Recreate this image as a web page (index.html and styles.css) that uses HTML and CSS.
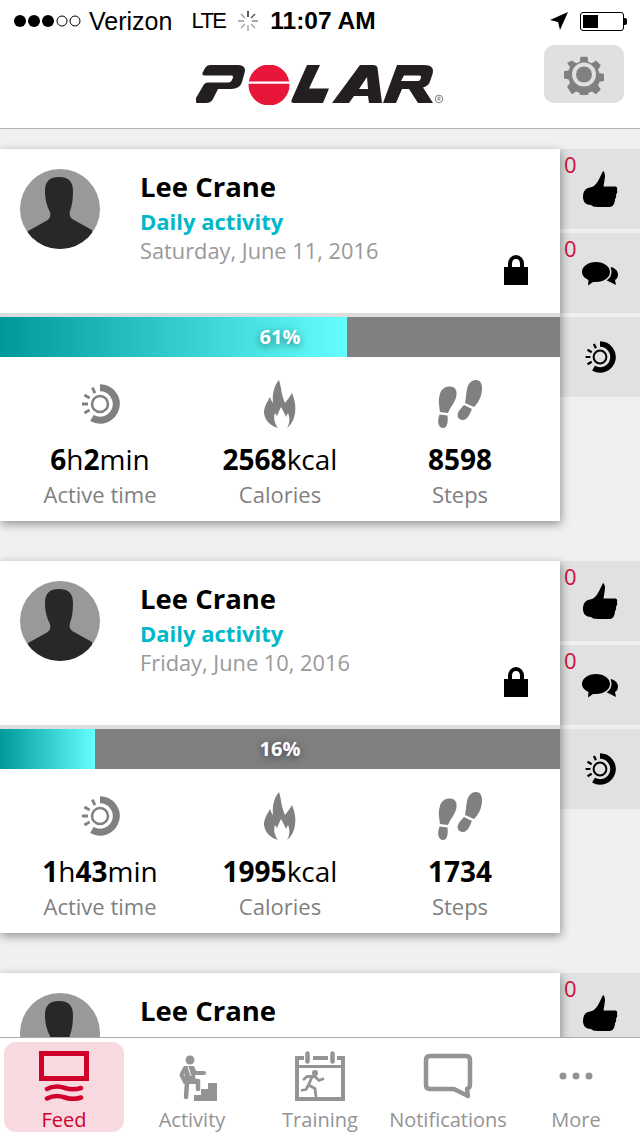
FILE: index.html
```html
<!DOCTYPE html>
<html lang="en">
  <head>
    <meta charset="UTF-8" />
    <meta name="viewport" content="width=device-width, initial-scale=1.0" />
    <title>Polar Feed</title>
    <link rel="stylesheet" href="styles.css">
  </head>
  <body>
    <!-- shared icons -->
    <svg class="sprite" aria-hidden="true">
      <symbol id="i-ring" viewBox="0 0 40 40">
        <path d="M20 3.800A16.200 16.200 0 1 1 11.900 34" fill="none" stroke="currentColor" stroke-width="7" />
        <circle cx="20" cy="20" r="8" fill="none" stroke="currentColor" stroke-width="2.500" />
        <path d="M9.600 26 4.400 29M8 20H2M9.600 14 4.400 11M14.900 9.100 12.400 3.700" fill="none" stroke="currentColor" stroke-width="2.800" />
      </symbol>
      <symbol id="i-flame" viewBox="0 0 32 48">
        <path fill="currentColor" d="M15 0C17 6 17 10 18 14C19 18 20 21 21 23C23 20 26 17 28 13C31 20 32 27 31 33C30 40 27 45 23 48C26 43 26 38 24 33L22 37C21 34 19 31 17 27C15 31 14 34 13 36L11 33C9 38 11 44 14 48C7 46 1 41 0 33C0 26 3 23 6 17C7 20 8 22 9 23C8 14 10 6 15 0Z" />
      </symbol>
      <symbol id="i-feet" viewBox="0 0 46 48">
        <path fill="currentColor" d="M13 6.500C18 6.500 20 10 19.500 15C19 21 14 26 11 33L3 32C2 24 1 20 3 14C4 9 8 6.500 13 6.500Z" />
        <path fill="currentColor" d="M2.500 34.500L10.500 35.500C11 40 11 48 6 48C1 48 0 41 2.500 34.500Z" />
        <path fill="currentColor" d="M39 0C44 0 45.500 5 45 10C44.500 17 41 23 37 27L28 23C29 18 29 14 30 9C31 4 34 0 39 0Z" />
        <path fill="currentColor" d="M27 25L35 29C33 33 31 40 26 40C21 40 20 36 21 33C22 30 25 27 27 25Z" />
      </symbol>
      <symbol id="i-thumb" viewBox="0 0 35 36">
        <path fill="currentColor" d="M20 0C22 1 22.500 5 21.500 9L20.500 15.500H32C34 15.500 34.500 17 34 19C34.500 21 34 22.500 33 23.500C33.500 25.500 33 27 32 28C32 31 31 33 30 34.500C29 35.500 27 36 25 36H15C11 36 9 35 8 34C3 34 0 31 0 26C0 21 2 18 5 17C8 16 10 16 12 14C15 11 17 6 20 0Z" />
      </symbol>
      <symbol id="i-chat" viewBox="0 0 36 24">
        <path fill="currentColor" d="M29 5C33 6 36 9 36 12.500C36 15 35 17 33 18L34 23L28 20L24 18Z" />
        <path fill="currentColor" stroke="#e0e1e3" stroke-width="3" paint-order="stroke" d="M14 0C22 0 28 4.500 28 10S22 20 14 20H11L6 23.500L6.500 18C3 16.500 0 13.500 0 10C0 4.500 6 0 14 0Z" />
      </symbol>
      <symbol id="i-lock" viewBox="0 0 24 30">
        <path fill="currentColor" d="M0 12h24v18H0z" />
        <path fill="none" stroke="currentColor" stroke-width="4" d="M6 13V9c0-4 2.500-7 6-7s6 3 6 7v4" />
      </symbol>
    </svg>

    <div class="status">
      <svg class="signal" width="68" height="14" viewBox="0 0 68 14">
        <circle cx="7" cy="7" r="6" />
        <circle cx="21" cy="7" r="6" />
        <circle cx="35" cy="7" r="6" />
        <circle class="off" cx="49" cy="7" r="5" />
        <circle class="off" cx="62" cy="7" r="5" />
      </svg>
      <span class="carrier">Verizon</span>
      <span class="net">LTE</span>
      <svg class="spinner" width="20" height="20" viewBox="0 0 20 20">
        <path d="M10 0v6" stroke="#222" />
        <path d="M17 3 13 7" stroke="#555" />
        <path d="M20 10h-6" stroke="#888" />
        <path d="M17 17 13 13M10 20v-6M3 17 7 13" stroke="#aaa" />
        <path d="M0 10h6M3 3 7 7" stroke="#999" />
      </svg>
      <span class="clock">11:07 AM</span>
      <svg class="arrow" width="18" height="18" viewBox="0 0 18 18"><path d="M18 0 0 8l8 2 2 8z" /></svg>
      <span class="battery"><span class="battery-fill"></span></span>
    </div>

    <header class="topbar">
      <span></span>
      <svg class="logo" width="249" height="40" viewBox="0 0 249 40" role="img" aria-label="Polar">
        <path fill="#231f20" d="M14 0H41Q51 0 48.500 8L46 17Q44 24 35 24H22L17 34Q15 38 10 38H2Q-2 38 0 33L7 21Q8.500 17.500 12 17.500H32Q35 17.500 36 15L37 12.500Q37.500 10.500 35 10.500H9Q5 10.500 7 7L9 3Q11 0 14 0Z" />
        <circle fill="#e8173a" cx="73" cy="20" r="20.500" />
        <path fill="#fff" d="M52 16.500h42v2.300H52z" />
        <path fill="#231f20" d="M111 0H124L113 23.500H133L127 38H98Q94 38 96 34Z" />
        <path fill="#231f20" fill-rule="evenodd" d="M164 0H177Q181 0 181.500 3L186 38H173L172 31H158L153 38H136ZM171 12 163 24H172Z" />
        <path fill="#231f20" fill-rule="evenodd" d="M201 0H228Q239 0 236.500 9L234.500 15Q233 21 227 22.500L237 38H222L213 24H206L200 38H187ZM208 10.500 205 16H222Q224 16 224.500 14L225 12.500Q225.500 10.500 223 10.500Z" />
        <circle cx="243" cy="34" r="3.800" fill="none" stroke="#666" stroke-width=".8" />
        <path d="M242 36v-4h1.300q1 0 1 1t-1 1h-1.300m1.300 0 1 2" fill="none" stroke="#666" stroke-width=".6" />
      </svg>
      <button class="gear-btn" aria-label="Settings">
        <svg width="40" height="41" viewBox="0 0 40 41">
          <path fill="#808080" fill-rule="evenodd" d="M16 0h8l1 6 4 1.700 5-3.200 5.500 5.500-3.300 5 1.800 4 6 1v8l-6 1-1.800 4 3.300 5-5.500 5.500-5-3.300-4 1.800-1 6h-8l-1-6-4-1.800-5 3.300L.5 35l3.300-5-1.800-4-6-1v-8l6-1 1.800-4-3.300-5L6 4.500l5 3.200L15 6z" transform="translate(2.700 2.700) scale(.865)" />
          <circle cx="20" cy="20.500" r="12" fill="#e0e0e0" />
          <circle cx="20" cy="20.500" r="8" fill="#808080" />
        </svg>
      </button>
    </header>

    <main class="feed">
      <article class="entry">
        <div class="card">
          <div class="card-top">
            <svg class="avatar" width="80" height="80" viewBox="0 0 80 80">
              <clipPath id="av1"><circle cx="40" cy="40" r="40" /></clipPath>
              <g clip-path="url(#av1)">
                <path fill="#999" d="M0 0h80v80H0z" />
                <path fill="#282828" d="M39 8c9 0 14 4 14 14 0 8-1 15-3 20-1 4 0 7 4 9l18 10v19H8V62l18-10c4-2 5-5 4-9-3-6-5-12-5-21C25 12 30 8 39 8z" />
              </g>
            </svg>
            <div class="who">
              <div class="name">Lee Crane</div>
              <div class="kind">Daily activity</div>
              <div class="date">Saturday, June 11, 2016</div>
            </div>
            <svg class="lock"><use href="#i-lock" /></svg>
          </div>
          <div class="bar">
            <div class="bar-fill" style="width: 347px"></div>
            <span class="bar-text">61%</span>
          </div>
          <div class="stats">
            <div class="stat">
              <svg class="stat-icon ring"><use href="#i-ring" /></svg>
              <div class="value"><b>6</b>h<b>2</b>min</div>
              <div class="label">Active time</div>
            </div>
            <div class="stat">
              <svg class="stat-icon flame"><use href="#i-flame" /></svg>
              <div class="value"><b>2568</b>kcal</div>
              <div class="label">Calories</div>
            </div>
            <div class="stat">
              <svg class="stat-icon feet"><use href="#i-feet" /></svg>
              <div class="value"><b>8598</b></div>
              <div class="label">Steps</div>
            </div>
          </div>
        </div>
        <aside class="side">
          <div class="tile"><span class="count">0</span><svg class="tile-icon thumb"><use href="#i-thumb" /></svg></div>
          <div class="tile"><span class="count">0</span><svg class="tile-icon chat"><use href="#i-chat" /></svg></div>
          <div class="tile"><svg class="tile-icon ring-sm"><use href="#i-ring" /></svg></div>
        </aside>
      </article>

      <article class="entry">
        <div class="card">
          <div class="card-top">
            <svg class="avatar" width="80" height="80" viewBox="0 0 80 80">
              <clipPath id="av2"><circle cx="40" cy="40" r="40" /></clipPath>
              <g clip-path="url(#av2)">
                <path fill="#999" d="M0 0h80v80H0z" />
                <path fill="#282828" d="M39 8c9 0 14 4 14 14 0 8-1 15-3 20-1 4 0 7 4 9l18 10v19H8V62l18-10c4-2 5-5 4-9-3-6-5-12-5-21C25 12 30 8 39 8z" />
              </g>
            </svg>
            <div class="who">
              <div class="name">Lee Crane</div>
              <div class="kind">Daily activity</div>
              <div class="date">Friday, June 10, 2016</div>
            </div>
            <svg class="lock"><use href="#i-lock" /></svg>
          </div>
          <div class="bar">
            <div class="bar-fill" style="width: 95px"></div>
            <span class="bar-text">16%</span>
          </div>
          <div class="stats">
            <div class="stat">
              <svg class="stat-icon ring"><use href="#i-ring" /></svg>
              <div class="value"><b>1</b>h<b>43</b>min</div>
              <div class="label">Active time</div>
            </div>
            <div class="stat">
              <svg class="stat-icon flame"><use href="#i-flame" /></svg>
              <div class="value"><b>1995</b>kcal</div>
              <div class="label">Calories</div>
            </div>
            <div class="stat">
              <svg class="stat-icon feet"><use href="#i-feet" /></svg>
              <div class="value"><b>1734</b></div>
              <div class="label">Steps</div>
            </div>
          </div>
        </div>
        <aside class="side">
          <div class="tile"><span class="count">0</span><svg class="tile-icon thumb"><use href="#i-thumb" /></svg></div>
          <div class="tile"><span class="count">0</span><svg class="tile-icon chat"><use href="#i-chat" /></svg></div>
          <div class="tile"><svg class="tile-icon ring-sm"><use href="#i-ring" /></svg></div>
        </aside>
      </article>

      <article class="entry">
        <div class="card">
          <div class="card-top">
            <svg class="avatar" width="80" height="80" viewBox="0 0 80 80">
              <clipPath id="av3"><circle cx="40" cy="40" r="40" /></clipPath>
              <g clip-path="url(#av3)">
                <path fill="#999" d="M0 0h80v80H0z" />
                <path fill="#282828" d="M39 8c9 0 14 4 14 14 0 8-1 15-3 20-1 4 0 7 4 9l18 10v19H8V62l18-10c4-2 5-5 4-9-3-6-5-12-5-21C25 12 30 8 39 8z" />
              </g>
            </svg>
            <div class="who">
              <div class="name">Lee Crane</div>
              <div class="kind">Daily activity</div>
            </div>
          </div>
        </div>
        <aside class="side">
          <div class="tile"><span class="count">0</span><svg class="tile-icon thumb"><use href="#i-thumb" /></svg></div>
        </aside>
      </article>
    </main>

    <nav class="tabs">
      <a class="tab active">
        <svg width="50" height="50" viewBox="0 0 50 50">
          <path fill="none" stroke="currentColor" stroke-width="5" d="M2.500 2.500h45v25h-45z" />
          <path fill="none" stroke="currentColor" stroke-width="4.500" stroke-linecap="round" d="M8 38c6-3 12-3 18-1s10 2 16 0M8 47.500c6-3 12-3 18-1s10 2 16 0" />
        </svg>
        <span>Feed</span>
      </a>
      <a class="tab">
        <svg width="50" height="50" viewBox="0 0 50 50">
          <circle cx="23" cy="9" r="4.500" fill="currentColor" />
          <path fill="currentColor" d="M17 15H27L29 33H18Z" />
          <path fill="none" stroke="currentColor" stroke-width="4" stroke-linecap="round" stroke-linejoin="round" d="M18 17 14.500 24 18 31M26 18 28 22H37" />
          <path fill="none" stroke="currentColor" stroke-width="4.500" stroke-linecap="round" stroke-linejoin="round" d="M20 32 19 46M25 30H31V38" />
          <path fill="none" stroke="#fff" stroke-width="1" d="M21 15.500 24 25" />
          <path fill="currentColor" d="M27 50V44H34V38H41V32H50V50Z" />
        </svg>
        <span>Activity</span>
      </a>
      <a class="tab">
        <svg width="50" height="50" viewBox="0 0 50 50">
          <path fill="currentColor" d="M0 5h9v4H4v37h42V9h-4V5h8v45H0z" />
          <path fill="currentColor" d="M18 5h15v4H18zM4 14h42v3H4z" />
          <path fill="none" stroke="currentColor" stroke-width="4.500" stroke-linecap="round" d="M12.500 2.500v8M37.500 2.500v8" />
          <circle cx="20" cy="22" r="3" fill="currentColor" />
          <path fill="none" stroke="currentColor" stroke-width="2.800" stroke-linejoin="round" d="M8 29 12 25.500H20L24 29.500 29 27.500M17 26 13.500 34 20 37.500 21 46M13.500 34 11 38.500 6 39.500" />
        </svg>
        <span>Training</span>
      </a>
      <a class="tab">
        <svg width="50" height="50" viewBox="0 0 50 50">
          <path fill="none" stroke="currentColor" stroke-width="4.500" stroke-linejoin="round" d="M7 5H43Q47 5 47 9V33Q47 37 44 38L45 45 31 38H7Q3 38 3 34V9Q3 5 7 5Z" />
        </svg>
        <span>Notifications</span>
      </a>
      <a class="tab">
        <svg width="50" height="50" viewBox="0 0 50 50">
          <circle cx="12" cy="25" r="3.500" fill="currentColor" />
          <circle cx="25" cy="25" r="3.500" fill="currentColor" />
          <circle cx="38" cy="25" r="3.500" fill="currentColor" />
        </svg>
        <span>More</span>
      </a>
    </nav>
  </body>
</html>
```

FILE: styles.css
```css
* {
  box-sizing: border-box;
}

body {
  margin: 0;
  width: 640px;
  height: 1136px;
  overflow: hidden;
  display: flex;
  flex-direction: column;
  font-family: "Open Sans", sans-serif;
  color: #000;
  background-color: #f0f0f0;
}

.sprite {
  position: absolute;
  width: 0;
  height: 0;
}

/* status bar */
.status {
  height: 40px;
  flex: none;
  display: flex;
  align-items: center;
  padding: 2px 12px 0 13px;
  background-color: #fff;
  font-family: "Liberation Sans", sans-serif;
  font-size: 25px;
}

.signal circle {
  fill: #000;
}

.signal .off {
  fill: none;
  stroke: #000;
  stroke-width: 1;
}

.carrier {
  margin-left: 8px;
}

.net {
  margin-left: 19px;
  font-size: 22px;
  letter-spacing: -1.6px;
}

.spinner {
  margin-left: 13px;
  stroke-width: 1.5;
}

.clock {
  margin-left: 12px;
  font-size: 24.5px;
  font-weight: 700;
}

.arrow {
  margin-left: auto;
}

.battery {
  position: relative;
  width: 44px;
  height: 19px;
  margin: 0 4px 0 12px;
  padding: 2px;
  border: 1px solid #000;
  border-radius: 3px;
}

.battery::after {
  content: "";
  position: absolute;
  right: -4px;
  top: 5px;
  width: 3px;
  height: 7px;
  background-color: #000;
  border-radius: 0 2px 2px 0;
}

.battery-fill {
  display: block;
  width: 15px;
  height: 100%;
  background-color: #000;
}

/* logo row */
.topbar {
  height: 89px;
  flex: none;
  display: grid;
  grid-template-columns: 1fr auto 1fr;
  align-items: start;
  background-color: #fff;
  border-bottom: 1px solid #b4b4b4;
}

.logo {
  margin-top: 25px;
}

.gear-btn {
  justify-self: end;
  width: 80px;
  height: 58px;
  margin: 5px 16px 0 0;
  padding: 0;
  border: 0;
  border-radius: 10px;
  background-color: #e0e0e0;
  display: flex;
  align-items: center;
  justify-content: center;
}

/* feed */
.feed {
  flex: 1;
  min-height: 0;
  overflow: hidden;
  padding-top: 20px;
}

.entry {
  display: flex;
  align-items: flex-start;
  height: 372px;
  margin-bottom: 40px;
}

.card {
  position: relative;
  z-index: 1;
  width: 560px;
  flex: none;
  background-color: #ddd;
  box-shadow: 1px 3px 9px rgba(0, 0, 0, 0.4);
}

.card-top {
  position: relative;
  height: 164px;
  padding: 20px 0 0 20px;
  display: flex;
  background-color: #fff;
}

.avatar {
  flex: none;
}

.who {
  margin-left: 40px;
  margin-top: -1px;
}

.name {
  font-size: 27.5px;
  font-weight: 700;
  line-height: 38px;
}

.kind {
  font-size: 22px;
  font-weight: 700;
  line-height: 30px;
  color: #00b8c8;
}

.date {
  font-size: 21.8px;
  line-height: 30px;
  color: #999;
}

.lock {
  position: absolute;
  left: 504px;
  top: 106px;
  width: 24px;
  height: 30px;
}

.bar {
  position: relative;
  height: 40px;
  margin-top: 4px;
  padding-bottom: 2px;
  background-color: #808080;
  display: flex;
  align-items: center;
  justify-content: center;
}

.bar-fill {
  position: absolute;
  left: 0;
  top: 0;
  bottom: 0;
  background: linear-gradient(to right, #009999, #66ffff);
}

.bar-text {
  position: relative;
  font-size: 20px;
  font-weight: 700;
  color: #fff;
  text-shadow: 0 2px 8px rgba(0, 0, 0, 0.5);
}

.stats {
  height: 164px;
  padding: 23px 10px 0;
  display: grid;
  grid-template-columns: repeat(3, 1fr);
  background-color: #fff;
}

.stat {
  display: flex;
  flex-direction: column;
  align-items: center;
}

.stat-icon {
  height: 48px;
  color: #808080;
}

.stat-icon.ring {
  width: 40px;
  height: 40px;
  margin: 4px 0;
}

.stat-icon.flame {
  width: 32px;
}

.stat-icon.feet {
  width: 46px;
}

.value {
  margin-top: 12px;
  font-size: 28px;
  line-height: 38px;
}

.value b {
  font-weight: 700;
}

.label {
  font-size: 22px;
  line-height: 30px;
  color: #808080;
  margin-top: 1px;
}

/* tiles beside each card */
.side {
  flex: 1;
  display: flex;
  flex-direction: column;
  gap: 4px;
}

.tile {
  position: relative;
  height: 80px;
  background-color: #e0e1e3;
  display: flex;
  align-items: center;
  justify-content: center;
  color: #000;
}

.count {
  position: absolute;
  left: 4px;
  top: 0;
  font-size: 22px;
  line-height: 30px;
  color: #d0103a;
}

.tile-icon.thumb {
  width: 35px;
  height: 36px;
}

.tile-icon.chat {
  width: 36px;
  height: 24px;
  margin-top: 2px;
}

.tile-icon.ring-sm {
  width: 32px;
  height: 32px;
}

/* tab bar */
.tabs {
  height: 99px;
  flex: none;
  position: relative;
  z-index: 2;
  display: grid;
  grid-template-columns: repeat(5, 128px);
  background-color: #fff;
  border-top: 1px solid #aaa;
}

.tab {
  display: flex;
  flex-direction: column;
  align-items: center;
  margin: 4px;
  padding-top: 9px;
  height: 90px;
  border-radius: 12px;
  color: #949494;
  font-size: 20px;
  line-height: 26px;
  white-space: nowrap;
}

.tab svg {
  flex: none;
}

.tab span {
  margin-top: 6px;
}

.tab.active {
  background-color: #f8d9e0;
  color: #d0002a;
}
```
